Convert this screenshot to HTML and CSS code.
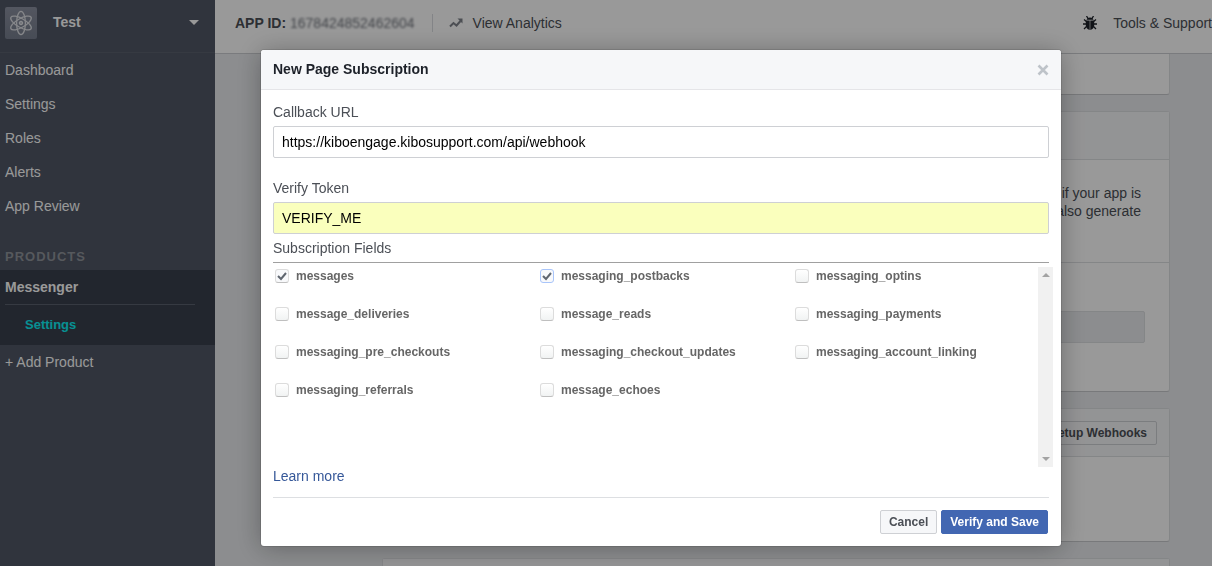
FILE: index.html
```html
<!DOCTYPE html>
<html lang="en">
<head>
<meta charset="utf-8">
<title>Messenger Settings</title>
<link rel="stylesheet" href="styles.css">
</head>
<body>
<div class="app">
  <aside class="sidebar">
    <button class="app-switch" type="button">
      <svg class="app-icon" viewBox="0 0 32 32" aria-hidden="true">
        <defs><linearGradient id="tile" x2="0" y2="1"><stop offset="0" stop-color="#8b90a0"/><stop offset="1" stop-color="#777e8e"/></linearGradient></defs>
        <rect width="32" height="32" rx="2" fill="url(#tile)"/>
        <g class="orbits">
          <ellipse cx="16" cy="16" rx="4.400" ry="11.600"/>
          <ellipse cx="16" cy="16" rx="4.400" ry="11.600" transform="rotate(60 16 16)"/>
          <ellipse cx="16" cy="16" rx="4.400" ry="11.600" transform="rotate(120 16 16)"/>
        </g>
        <circle class="nucleus" cx="16" cy="16" r="1.800"/>
      </svg>
      <span class="app-name">Test</span>
      <span class="caret"></span>
    </button>
    <nav class="menu">
      <a href="#dashboard">Dashboard</a>
      <a href="#settings">Settings</a>
      <a href="#roles">Roles</a>
      <a href="#alerts">Alerts</a>
      <a href="#review">App Review</a>
    </nav>
    <h2 class="menu-title">PRODUCTS</h2>
    <div class="product">
      <a class="product-name" href="#messenger">Messenger</a>
      <a class="product-page" href="#messenger-settings">Settings</a>
    </div>
    <a class="add-product" href="#add">+ Add Product</a>
  </aside>
  <div class="page">
    <header class="topbar">
      <span class="app-id"><b>APP ID:</b> <span class="blurred">1678424852462604</span></span>
      <a class="analytics" href="#analytics">
        <svg class="trend" viewBox="0 0 14 10" aria-hidden="true"><path d="M1 8.500 4.500 5 7.500 7.500 11.500 3"/><path class="trend-head" d="M8.500 .5H13.500V5.500Z"/></svg>
        View Analytics
      </a>
      <a class="tools" href="#tools">
        <svg class="bug" viewBox="0 0 14 14" aria-hidden="true">
          <path class="bug-legs" d="M4 6 1 3.500M4 8H0M4 10 1 13M10 6 13 3.500M10 8H14M10 10 13 13M3.500 0 5 2.500M10.500 0 9 2.500"/>
          <path d="M3.500 3.800Q4 1.500 7 1.500T10.500 3.800ZM2.800 4.500H6.700V14Q2.800 13 2.800 9ZM11.200 4.500H7.300V14Q11.200 13 11.200 9Z"/>
        </svg>
        Tools &amp; Support
      </a>
    </header>
    <main class="cards">
      <section class="card card-first"></section>
      <section class="card card-token">
        <div class="card-head"></div>
        <p class="card-text">if your app is<br>also generate</p>
        <div class="card-row"><div class="token-box"></div></div>
      </section>
      <section class="card card-hooks">
        <div class="card-head"><button class="setup" type="button">Setup Webhooks</button></div>
      </section>
      <section class="card card-last"><div class="card-head"></div></section>
    </main>
  </div>
</div>
<div class="overlay">
  <form class="dialog" role="dialog" aria-labelledby="dialog-title">
    <header class="dialog-head">
      <h1 id="dialog-title">New Page Subscription</h1>
      <button class="close" type="button" aria-label="Close"><svg viewBox="0 0 12 12" aria-hidden="true"><path d="M1.500 1.500 10.500 10.500M10.500 1.500 1.500 10.500"/></svg></button>
    </header>
    <div class="dialog-body">
      <label class="label" for="callback">Callback URL</label>
      <input class="text" id="callback" type="text" value="https://kiboengage.kibosupport.com/api/webhook">
      <label class="label label-token" for="token">Verify Token</label>
      <input class="text filled" id="token" type="text" value="VERIFY_ME">
      <p class="label label-fields" id="fields">Subscription Fields</p>
      <div class="scroller" role="group" aria-labelledby="fields">
        <div class="options">
          <label><input type="checkbox" checked>messages</label>
          <label><input class="focused" type="checkbox" checked>messaging_postbacks</label>
          <label><input type="checkbox">messaging_optins</label>
          <label><input type="checkbox">message_deliveries</label>
          <label><input type="checkbox">message_reads</label>
          <label><input type="checkbox">messaging_payments</label>
          <label><input type="checkbox">messaging_pre_checkouts</label>
          <label><input type="checkbox">messaging_checkout_updates</label>
          <label><input type="checkbox">messaging_account_linking</label>
          <label><input type="checkbox">messaging_referrals</label>
          <label><input type="checkbox">message_echoes</label>
        </div>
        <div class="scrollbar" aria-hidden="true"><span class="arrow-up"></span><span class="arrow-down"></span></div>
      </div>
      <a class="learn" href="#learn">Learn more</a>
      <footer class="actions">
        <button class="button" type="button">Cancel</button>
        <button class="button primary" type="submit">Verify and Save</button>
      </footer>
    </div>
  </form>
</div>
</body>
</html>
```

FILE: styles.css
```css
* { box-sizing: border-box; }
body {
  margin: 0;
  background: #e9ebee;
  color: #4b4f56;
  font: 14px/18px "Liberation Sans", Arial, sans-serif;
  overflow: hidden;
}
a { color: inherit; text-decoration: none; }
h1, h2, p { margin: 0; font-size: inherit; }
button { font: inherit; }
.app { display: flex; height: 100vh; overflow: hidden; }

/* Sidebar */
.sidebar { flex: none; width: 215px; background: #505766; color: #fff; }
.app-switch {
  display: flex;
  align-items: center;
  width: 100%;
  height: 53px;
  padding: 0 16px 6px 5px;
  border: 0;
  border-bottom: 1px solid #5b616e;
  background: none;
  color: #fff;
  text-align: left;
}
.app-icon { width: 32px; height: 32px; }
.orbits { fill: none; stroke: #dfe1e6; stroke-width: 1.3; }
.nucleus { fill: #c6cad2; stroke: #eceef1; stroke-width: 1; }
.app-name { flex: 1; padding: 0 0 2px 16px; font-weight: bold; }
.caret { margin-bottom: 2px; border: 5px solid transparent; border-top-color: #fff; border-bottom: 0; }
.menu a { display: block; padding: 8px 5px; }
.menu-title { padding: 25px 5px 4px; color: #90949c; font-size: 13px; letter-spacing: 1px; }
.product { padding: 0 20px 0 5px; background: #39404d; font-weight: bold; }
.product-name { display: block; padding: 8px 0; border-bottom: 1px solid #5b616e; }
.product-page { display: block; padding: 11px 20px; color: #0cf0f5; font-size: 13px; }
.add-product { display: block; padding: 8px 5px; }

/* Page behind the dialog */
.page { flex: 1; min-width: 0; }
.topbar {
  display: flex;
  align-items: center;
  height: 54px;
  padding: 0 0 7px 20px;
  border-bottom: 1px solid #ccced2;
  background: #fff;
  white-space: nowrap;
}
.app-id { padding-right: 17px; }
.blurred { color: #70747c; filter: blur(1px); }
.analytics { display: flex; align-items: center; padding-left: 16px; border-left: 1px solid #dadde1; }
.trend { width: 14px; height: 10px; margin-right: 10px; fill: none; stroke: #7f838b; stroke-width: 2; }
.trend-head { fill: #7f838b; stroke: none; }
.tools { display: flex; align-items: center; margin-left: auto; }
.bug { width: 14px; height: 14px; margin-right: 16px; fill: #1d2129; }
.bug-legs { stroke: #1d2129; stroke-width: 1.3; }
.cards { padding: 0 42px 0 167px; }
.card { margin-bottom: 16px; border: 1px solid #dddfe2; border-bottom-color: #c8cacd; border-radius: 3px; background: #fff; }
.card-first { height: 41px; border-top: 0; border-radius: 0 0 3px 3px; }
.card-head { height: 48px; border-bottom: 1px solid #dddfe2; background: #f6f7f9; }
.card-text { height: 102px; padding: 24px 28px; text-align: right; }
.card-row { height: 129px; padding: 48px 24px; border-top: 1px solid #dddfe2; }
.token-box { height: 32px; border: 1px solid #dddfe2; border-radius: 2px; background: #e9ebee; }
.card-hooks { height: 134px; }
.card-hooks .card-head { display: flex; align-items: center; justify-content: flex-end; padding-right: 12px; }
.setup { height: 24px; padding: 0 9px; border: 1px solid #ced0d4; border-radius: 2px; background: #f6f7f9; color: #4b4f56; font-size: 12px; font-weight: bold; }

/* Dialog */
.overlay {
  position: fixed;
  inset: 0;
  padding: 50px 0 0 110px;
  background: rgba(0, 0, 0, .4);
}
.dialog {
  max-width: 800px;
  margin: 0 auto;
  border-radius: 3px;
  background: #fff;
  box-shadow: 0 2px 26px rgba(0, 0, 0, .3), 0 0 0 1px rgba(0, 0, 0, .1);
}
.dialog-head {
  display: flex;
  align-items: center;
  justify-content: space-between;
  height: 40px;
  padding: 0 12px;
  border-bottom: 1px solid #e5e5e8;
  border-radius: 3px 3px 0 0;
  background: #f6f7f9;
  color: #1d2129;
}
.dialog-head h1 { padding-bottom: 2px; }
.close { display: flex; padding: 0; border: 0; background: none; }
.close svg { width: 12px; height: 12px; stroke: #bec3c9; stroke-width: 2.6; }
.dialog-body { padding: 13px 12px 12px; }
.label { display: block; margin-bottom: 5px; }
.text {
  display: block;
  width: 100%;
  height: 32px;
  padding: 0 8px;
  border: 1px solid #ced0d4;
  border-radius: 2px;
  background: #fff;
  color: #000;
  font: inherit;
}
.filled { background: #faffbd; }
.label-token { margin-top: 21px; }
.label-fields { margin: 5px 0 4px; padding-bottom: 5px; border-bottom: 1px solid #a0a0a0; }
.scroller { display: flex; height: 200px; margin-right: -4px; }
.options {
  display: grid;
  flex: 1;
  grid-template-columns: 265px 255px 1fr;
  grid-auto-rows: 18px;
  row-gap: 20px;
  padding-left: 2px;
  color: #666;
  font-size: 12px;
  font-weight: bold;
}
.options label { display: flex; align-items: center; }
.options input {
  appearance: none;
  width: 14px;
  height: 14px;
  margin: 0 7px 0 0;
  border: 1px solid #dcdcdc;
  border-bottom-color: #bfbfbf;
  border-radius: 3px;
  background: linear-gradient(#fff, #f1f3f3);
}
.options input:checked {
  background: url("data:image/svg+xml,%3Csvg xmlns='http://www.w3.org/2000/svg' viewBox='0 0 12 12'%3E%3Cpath d='M2 6l3 3 5-6' fill='none' stroke='%23606770' stroke-width='2'/%3E%3C/svg%3E") center / 12px no-repeat, #f8f9fb;
}
.options .focused { border-color: #a9c5fa; }
.scrollbar {
  display: flex;
  flex-direction: column;
  align-items: center;
  justify-content: space-between;
  width: 15px;
  padding: 6px 0;
  background: #f1f1f1;
}
.arrow-up, .arrow-down { border: 4px solid transparent; }
.arrow-up { border-top: 0; border-bottom-color: #a3a3a3; }
.arrow-down { border-bottom: 0; border-top-color: #a3a3a3; }
.learn { display: block; width: max-content; color: #365899; }
.actions {
  display: flex;
  justify-content: flex-end;
  gap: 4px;
  margin-top: 12px;
  padding: 12px 1px 0;
  border-top: 1px solid #dddfe2;
}
.button {
  height: 24px;
  padding: 0 8px;
  border: 1px solid #ced0d4;
  border-radius: 2px;
  background: #f6f7f9;
  color: #4b4f56;
  font-size: 12px;
  font-weight: bold;
}
.primary { border-color: #4267b2; background: #4267b2; color: #fff; }
```
